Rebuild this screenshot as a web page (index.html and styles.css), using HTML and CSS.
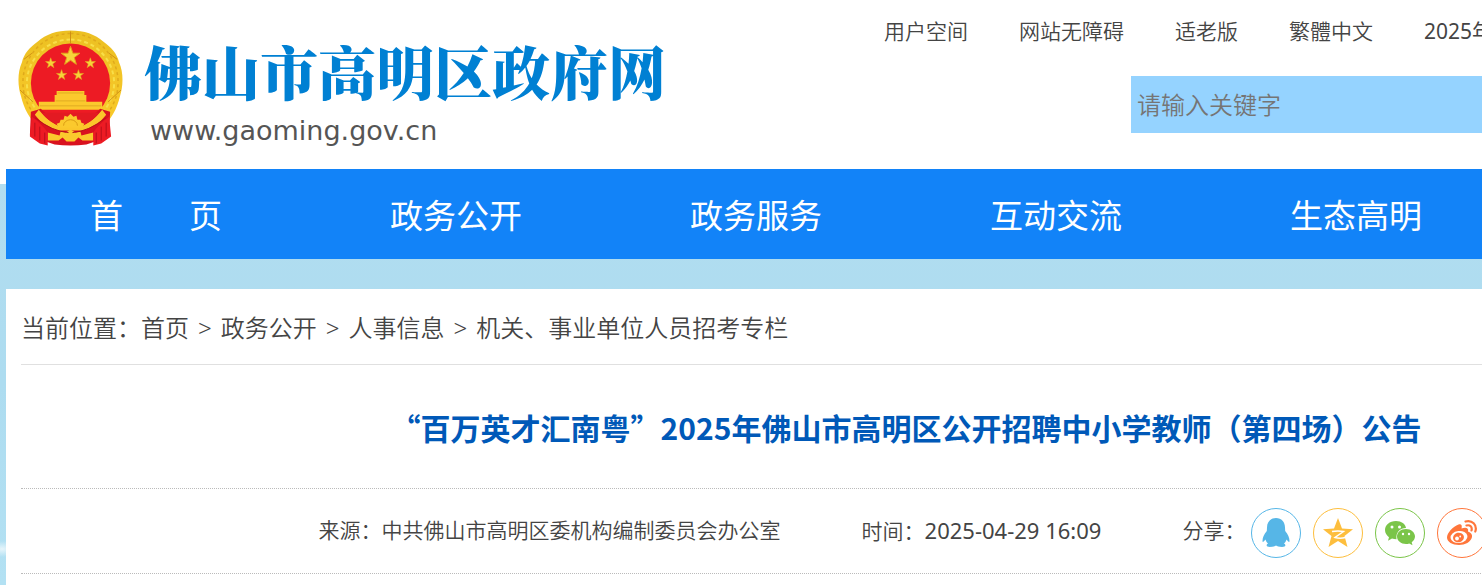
FILE: index.html
```html
<!DOCTYPE html>
<html lang="zh-CN">
<head>
    <meta charset="UTF-8">
    <meta name="viewport" content="width=device-width, initial-scale=1.0">
    <title>佛山市高明区政府网</title>
    <link rel="stylesheet" href="styles.css">
</head>
<body>
    <div class="wrap">
        <!-- 页头 -->
        <header class="header">
            <a href="#" class="logo">
                <svg class="emblem" viewBox="0 0 108 118" aria-hidden="true">
                    <defs>
                        <linearGradient id="gold" x1="0" y1="0" x2="0" y2="1">
                            <stop offset="0" stop-color="#ecc022"/>
                            <stop offset="1" stop-color="#fbcb2c"/>
                        </linearGradient>
                        <path id="star" d="M0-10 2.4-3.1 9.5-3.1 3.8 1.2 5.9 8.1 0 4-5.9 8.1-3.8 1.2-9.5-3.1-2.4-3.1z"/>
                    </defs>
                    <path d="M54 1C68 1 79 5 87 12C95 18 101 24 103 33C108 44 107 58 104 67C101 80 95 91 85 100L66 109H42L23 100C13 91 7 80 4 67C1 58 0 44 5 33C7 24 13 18 21 12C29 5 40 1 54 1z" fill="url(#gold)"/>
                    <path d="M54 4C27 4 6 27 6 53C6 70 13 82 23 91M54 4C81 4 102 27 102 53C102 70 95 82 85 91" fill="none" stroke="#dfa91b" stroke-width="1.500" stroke-dasharray="3 3"/>
                    <path d="M54 10C30 10 10 30 10 54C10 69 17 79 25 87M54 10C78 10 98 30 98 54C98 69 91 79 83 87" fill="none" stroke="#f8de48" stroke-width="2" stroke-dasharray="4 3"/>
                    <circle cx="54" cy="54" r="40" fill="#ed1b24"/>
                    <path d="M54 2V14M3 61 16 73M105 61 92 73M7 30 15 24M101 30 93 24" stroke="#cf9013" stroke-width="1"/>
                    <g fill="#f7d33a" stroke="#e4a41c" stroke-width="1">
                        <use href="#star" transform="translate(54 27)"/>
                        <use href="#star" transform="translate(34 34) scale(.55)"/>
                        <use href="#star" transform="translate(74 34) scale(.55)"/>
                        <use href="#star" transform="translate(45 46) scale(.55)"/>
                        <use href="#star" transform="translate(62 46) scale(.55)"/>
                    </g>
                    <path d="M40 62H68V66H70V73H86V81H22V73H38V66H40z" fill="#fbc92d"/>
                    <path d="M41 64H67M39 72H69M23 77H85" stroke="#e0ab22" stroke-width="1"/>
                    <path d="M14 83 24 80 40 94H68L84 80 94 83 93 103 82 112 70 116Q54 118 38 116L26 112 13 107z" fill="#d9121f"/>
                    <path d="M22 81C30 91 38 96 44 98L64 98C70 96 78 91 86 81L90 86C84 94 76 99 66 102H42C32 99 24 94 18 86z" fill="#fbc62b"/>
                    <path d="M25 84H83C78 91 70 95 64 98H44C38 95 30 91 25 84z" fill="#e31a22"/>
                    <path d="M43 94 44 91 47 91 48 87 51 88 54 85 57 88 60 87 61 91 64 91 65 94 68 95 66 99H42L40 95z" fill="#fbc92d"/>
                    <path d="M47 97A7 6 0 0 1 61 97" fill="none" stroke="#d99b13"/>
                    <path d="M31 104 43 107 44 103 49 104 54 101 59 104 64 103 65 107 77 104V112H66L62 109 58 113H50L46 109 42 112H31z" fill="#fbc92d"/>
                    <path d="M15 88C22 93 28 99 31 104V117L23 115 13 108zM93 88C86 93 80 99 77 104V117L85 115 95 108z" fill="#ed1b24"/>
                    <path d="M18 94V108M23 98V112M28 104V115M90 94V108M85 98V112M80 104V115M18 89Q36 103 52 104M90 89Q72 103 56 104" fill="none" stroke="#b50f1a" stroke-width="1"/>
                </svg>
                <span class="logo-text">
                    <span class="site-name">佛山市高明区政府网</span>
                    <span class="site-url">www.gaoming.gov.cn</span>
                </span>
            </a>
            <div class="tools">
                <div class="top-links">
                    <a href="#">用户空间</a>
                    <a href="#">网站无障碍</a>
                    <a href="#">适老版</a>
                    <a href="#">繁體中文</a>
                    <span class="today">2025年</span>
                </div>
                <form class="search">
                    <input type="text" placeholder="请输入关键字" aria-label="请输入关键字">
                </form>
            </div>
        </header>

        <!-- 主导航 -->
        <nav class="nav">
            <a href="#">首　　页</a>
            <a href="#">政务公开</a>
            <a href="#">政务服务</a>
            <a href="#">互动交流</a>
            <a href="#">生态高明</a>
        </nav>

        <!-- 正文 -->
        <main class="content">
            <div class="crumbs">
                <span>当前位置：</span>
                <a href="#">首页</a>
                <span class="sep">&gt;</span>
                <a href="#">政务公开</a>
                <span class="sep">&gt;</span>
                <a href="#">人事信息</a>
                <span class="sep">&gt;</span>
                <a href="#">机关、事业单位人员招考专栏</a>
            </div>
            <h1 class="title">“百万英才汇南粤”2025年佛山市高明区公开招聘中小学教师（第四场）公告</h1>
            <div class="meta">
                <span>来源：中共佛山市高明区委机构编制委员会办公室</span>
                <span>时间：<time>2025-04-29 16:09</time></span>
                <div class="share">
                    <span>分享：</span>
                    <a href="#" class="share-btn qq" aria-label="QQ">
                        <svg viewBox="0 0 30 30"><path d="M15 0C9.500 0 6 4 6 9.500L5.800 13C3 16 1.500 20 1.500 23C1.500 24.500 2.500 24.200 4.500 21.500C5 23.300 6 24.800 7 25.600C4.500 27 5.500 29 9 29C12 29 14 28.200 15 27.500C16 28.200 18 29 21 29C24.500 29 25.500 27 23 25.600C24 24.800 25 23.300 25.500 21.500C27.500 24.200 28.500 24.500 28.500 23C28.500 20 27 16 24.200 13L24 9.500C24 4 20.500 0 15 0z"/></svg>
                    </a>
                    <a href="#" class="share-btn qzone" aria-label="QQ空间">
                        <svg viewBox="0 0 30 30"><path d="M15 0 19 10.500 30 11.200 21.500 18 24.500 29 15 23 5.500 29 8.500 18 0 11.200 11 10.500z"/><path d="M9 13.500Q15 12.500 20.500 13.500L12 19.500Q17 21 22.500 19.500" fill="none" stroke="#fff" stroke-width="1.500"/></svg>
                    </a>
                    <a href="#" class="share-btn wechat" aria-label="微信">
                        <svg viewBox="0 0 30 30"><path d="M11 3C4.500 3 0 7 0 12C0 15 1.700 17.600 4 19.200L3 22.700 7 20.600Q9 21.200 11.500 21.200C10.500 14.500 15 10 21 10C20.500 6 16.500 3 11 3z"/><path d="M21 11C15.700 11 12 14.500 12 18.500C12 22.700 16 26 21 26Q22.700 26 24.200 25.500L27.500 27.200 26.700 24.200C28.700 22.800 30 20.700 30 18.500C30 14.500 26 11 21 11z"/><g fill="#fff"><circle cx="7" cy="9" r="1.500"/><circle cx="14.500" cy="9" r="1.500"/><circle cx="18" cy="16" r="1.200"/><circle cx="24" cy="16" r="1.200"/></g></svg>
                    </a>
                    <a href="#" class="share-btn weibo" aria-label="新浪微博">
                        <svg viewBox="0 0 30 30"><path d="M11.500 6.500C14 5.500 15.500 7 14.500 10.500C19 9 22 10 21 13.500C24 14.500 25.500 16.500 25 19C24 24 18 27 12 27C5.500 27 0 24 0 19.500C0 15 6 8.500 11.500 6.500z"/><ellipse cx="12" cy="19" rx="8.500" ry="6" fill="#fff" transform="rotate(-7 12 19)"/><ellipse cx="11.500" cy="19.500" rx="5.500" ry="4.800" transform="rotate(-15 11.500 19.500)"/><g fill="#fff"><circle cx="10" cy="20.500" r="1.900"/><circle cx="13.200" cy="18.500" r=".9"/></g><path d="M18.500 3.500C25 1.500 30.500 7 28.300 13.500M19.500 7.500C23 6.500 25.500 9 24.500 12.500" fill="none" stroke="#ff763b" stroke-width="2.200" stroke-linecap="round"/></svg>
                    </a>
                </div>
            </div>
        </main>
    </div>
</body>
</html>
```

FILE: styles.css
```css
* {
    margin: 0;
    padding: 0;
    box-sizing: border-box;
}

body {
    font-family: "Noto Sans", "Noto Sans CJK SC", sans-serif;
    font-weight: 350;
    color: #444;
    min-height: 100vh;
    padding: 0 6px;
    overflow-x: hidden;
    background: #fff no-repeat 0 184px;
    background-image: radial-gradient(ellipse 16px 8px at 2px 365px, #e6f5fb, transparent), linear-gradient(#b1ddf0, #addcf0 200px, #b3e1f3 400px);
}

a {
    color: inherit;
    text-decoration: none;
}

.wrap {
    min-width: 1800px;
}

/* 页头 */
.header {
    display: flex;
    height: 169px;
    background-color: #fff;
}

.logo {
    flex: 1;
    display: flex;
    align-items: flex-start;
    gap: 20px;
    padding: 29px 0 0 11px;
}

.emblem {
    width: 107px;
    height: 118px;
}

.logo-text {
    display: flex;
    flex-direction: column;
    padding-top: 5px;
}

.site-name {
    font-family: "Noto Serif CJK SC", "Noto Sans CJK SC", serif;
    font-size: 58px;
    font-weight: 900;
    line-height: 72px;
    color: #0080d3;
    white-space: nowrap;
}

.site-url {
    padding-left: 6px;
    font-family: "DejaVu Sans", sans-serif;
    font-size: 27px;
    font-weight: 400;
    line-height: 50px;
    color: #555;
}

.tools {
    width: 922px;
    padding-top: 16px;
}

.top-links {
    display: flex;
    gap: 51px;
    font-size: 21px;
    line-height: 30px;
    white-space: nowrap;
}

.today {
    font-weight: 400;
}

.search {
    margin: 30px 0 0 247px;
}

.search input {
    display: block;
    width: 100%;
    height: 57px;
    padding: 0 6px;
    border: none;
    background-color: #95d3ff;
    font-family: inherit;
    font-size: 24px;
    font-weight: 350;
}

.search input::placeholder {
    color: #757575;
}

/* 主导航 */
.nav {
    display: grid;
    grid-template-columns: repeat(6, 1fr);
    padding-top: 4px;
    background-color: #1283f8;
}

.nav a {
    font-size: 33px;
    font-weight: 400;
    line-height: 86px;
    color: #fff;
    text-align: center;
}

/* 正文 */
.content {
    margin-top: 30px;
    padding: 0 15px 30px;
    background-color: #fff;
}

.crumbs {
    display: flex;
    padding-top: 2px;
    font-size: 24px;
    line-height: 73px;
    border-bottom: 1px solid #e0e0e0;
}

.sep {
    padding: 0 9px;
}

.title {
    padding: 40px 0 38px;
    font-family: "Noto Sans CJK SC", sans-serif;
    font-size: 30px;
    font-weight: 700;
    line-height: 45px;
    color: #0059b8;
    text-align: center;
    border-bottom: 1px dotted #bbb;
}

.meta {
    display: flex;
    justify-content: center;
    gap: 81px;
    padding: 19px 0 15px;
    font-size: 21px;
    line-height: 44px;
    border-bottom: 1px dotted #bbb;
}

.meta time {
    font-size: 22px;
    font-weight: 400;
}

.share {
    display: flex;
}

.share-btn {
    display: flex;
    align-items: center;
    justify-content: center;
    width: 50px;
    height: 50px;
    margin: 0 6px;
    border: 1px solid currentColor;
    border-radius: 50%;
}

.share-btn svg {
    width: 30px;
    height: 30px;
    fill: currentColor;
}

.qq {
    color: #56b6e7;
}

.qzone {
    color: #fdbe3d;
}

.wechat {
    color: #7bc549;
}

.weibo {
    color: #ff763b;
}
```
